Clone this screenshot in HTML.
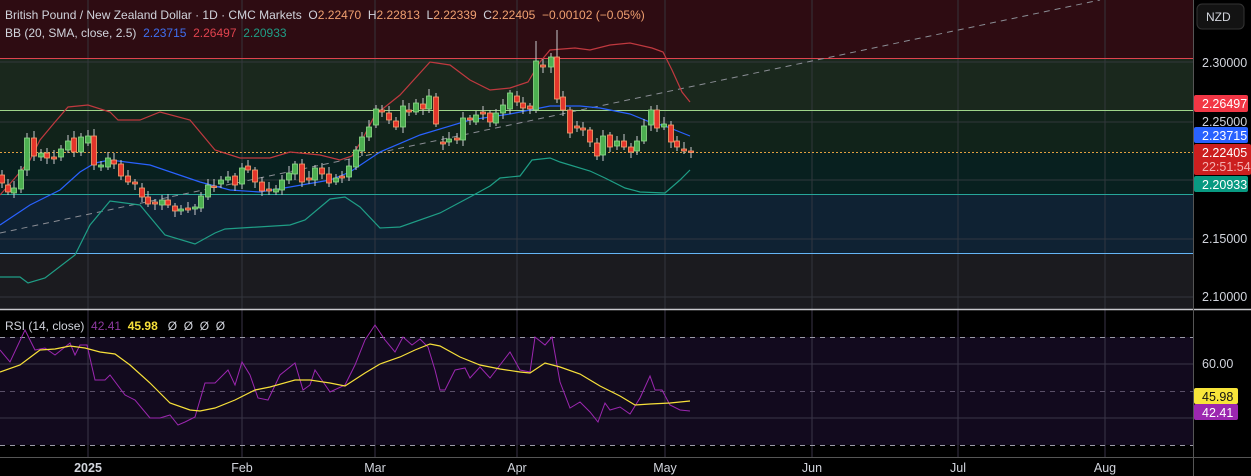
<!DOCTYPE html>
<html><head><meta charset="utf-8"><style>
html,body{margin:0;padding:0;background:#000;width:1251px;height:476px;overflow:hidden;font-family:"Liberation Sans",sans-serif}
svg text{font-family:"Liberation Sans",sans-serif}
</style></head><body>
<svg id="s" width="1251" height="476" xmlns="http://www.w3.org/2000/svg">
<rect x="0" y="0" width="1193" height="309" fill="#1b1b1f"/>
<rect x="0" y="0" width="1193" height="58" fill="#2e0c12"/>
<rect x="0" y="58" width="1193" height="52" fill="#1a281d"/>
<rect x="0" y="110" width="1193" height="42" fill="#11231a"/>
<rect x="0" y="152" width="1193" height="42" fill="#08201f"/>
<rect x="0" y="194" width="1193" height="59" fill="#0f2233"/>
<g stroke="#3a3d44" stroke-width="1" opacity="0.8">
<line x1="0" y1="62" x2="1193" y2="62"/><line x1="0" y1="122" x2="1193" y2="122"/><line x1="0" y1="180" x2="1193" y2="180"/><line x1="0" y1="239" x2="1193" y2="239"/><line x1="0" y1="297" x2="1193" y2="297"/>
<line x1="88" y1="0" x2="88" y2="457"/><line x1="242" y1="0" x2="242" y2="457"/><line x1="375" y1="0" x2="375" y2="457"/><line x1="517" y1="0" x2="517" y2="457"/><line x1="665" y1="0" x2="665" y2="457"/><line x1="812" y1="0" x2="812" y2="457"/><line x1="958" y1="0" x2="958" y2="457"/><line x1="1105" y1="0" x2="1105" y2="457"/>
</g>
<line x1="0" y1="58.5" x2="1193" y2="58.5" stroke="#e0434e"/>
<line x1="0" y1="110.5" x2="1193" y2="110.5" stroke="#9ed68a"/>
<line x1="0" y1="152.5" x2="1193" y2="152.5" stroke="#e0a040" stroke-dasharray="2,2"/>
<line x1="0" y1="194.5" x2="1193" y2="194.5" stroke="#26a69a"/>
<line x1="0" y1="253.5" x2="1193" y2="253.5" stroke="#64b5f6"/>
<line x1="0" y1="233" x2="1100" y2="0" stroke="#8a8d94" stroke-dasharray="6,5"/>
<g id="bb" fill="none" stroke-width="1.2"></g>
<g id="cd"></g>
<rect x="0" y="310" width="1193" height="147" fill="#000"/>
<rect x="0" y="337" width="1193" height="108" fill="#120a1e"/>
<g stroke="#3a3548"><line x1="0" y1="364" x2="1193" y2="364"/><line x1="0" y1="418" x2="1193" y2="418"/>
<line x1="88" y1="310" x2="88" y2="457"/><line x1="242" y1="310" x2="242" y2="457"/><line x1="375" y1="310" x2="375" y2="457"/><line x1="517" y1="310" x2="517" y2="457"/><line x1="665" y1="310" x2="665" y2="457"/><line x1="812" y1="310" x2="812" y2="457"/><line x1="958" y1="310" x2="958" y2="457"/><line x1="1105" y1="310" x2="1105" y2="457"/></g>
<g stroke="#9a9aa6" stroke-dasharray="5,5"><line x1="0" y1="337.5" x2="1193" y2="337.5"/><line x1="0" y1="391.5" x2="1193" y2="391.5" stroke="#5a5068"/><line x1="0" y1="445.5" x2="1193" y2="445.5"/></g>
<polyline id="rsi" fill="none" stroke="#9c27b0" stroke-width="1"/>
<polyline id="rsma" fill="none" stroke="#f7e03a" stroke-width="1.2"/>
<line x1="0" y1="309.5" x2="1251" y2="309.5" stroke="#c8c8cc" stroke-width="1.5"/>
<line x1="0" y1="457.5" x2="1251" y2="457.5" stroke="#555"/>
<line x1="1193.5" y1="0" x2="1193.5" y2="476" stroke="#555"/>
<text x="5" y="19" font-size="12" fill="#d1d4dc" xml:space="preserve" style="white-space:pre">British Pound / New Zealand Dollar · 1D · CMC Markets  O<tspan fill="#f0a070">2.22470</tspan>  H<tspan fill="#f0a070">2.22813</tspan>  L<tspan fill="#f0a070">2.22339</tspan>  C<tspan fill="#f0a070">2.22405  −0.00102 (−0.05%)</tspan></text>
<text x="5" y="37" font-size="12" fill="#d1d4dc" xml:space="preserve" style="white-space:pre">BB (20, SMA, close, 2.5)  <tspan fill="#3f6ff0">2.23715</tspan>  <tspan fill="#e0434e">2.26497</tspan>  <tspan fill="#1f9e86">2.20933</tspan></text>
<text x="5" y="330" font-size="12" fill="#d1d4dc" xml:space="preserve" style="white-space:pre">RSI (14, close)  <tspan fill="#8e3aa0">42.41</tspan>  <tspan fill="#f7e03a" font-weight="bold">45.98</tspan>   Ø  Ø  Ø  Ø</text>
<rect x="1197" y="4" width="47" height="25" rx="5" fill="#131313" stroke="#333"/>
<text x="1206" y="21" font-size="12" fill="#d1d4dc">NZD</text>
<g font-size="12.5" fill="#d1d4dc">
<text x="1202" y="67">2.30000</text><text x="1202" y="126">2.25000</text><text x="1202" y="243">2.15000</text><text x="1202" y="301">2.10000</text><text x="1202" y="368">60.00</text></g>
<rect x="1194" y="95" width="54" height="17" rx="2" fill="#f23645"/><text x="1202" y="108" font-size="12.5" fill="#fff">2.26497</text>
<rect x="1194" y="127" width="54" height="16" rx="2" fill="#2962ff"/><text x="1202" y="140" font-size="12.5" fill="#fff">2.23715</text>
<rect x="1194" y="144" width="57" height="31" rx="2" fill="#cc1f1f"/><text x="1202" y="157" font-size="12.5" fill="#fff">2.22405</text><text x="1202" y="171" font-size="12.5" fill="#f4b0b0">22:51:54</text>
<rect x="1194" y="176" width="54" height="16" rx="2" fill="#089981"/><text x="1202" y="189" font-size="12.5" fill="#fff">2.20933</text>
<rect x="1194" y="388" width="44" height="16" rx="2" fill="#f7e53a"/><text x="1202" y="401" font-size="12.5" fill="#111">45.98</text>
<rect x="1194" y="404" width="44" height="16" rx="2" fill="#9c27b0"/><text x="1202" y="417" font-size="12.5" fill="#fff">42.41</text>
<g font-size="12.5" fill="#d1d4dc" text-anchor="middle">
<text x="88" y="472" font-weight="bold">2025</text><text x="242" y="472">Feb</text><text x="375" y="472">Mar</text><text x="517" y="472">Apr</text><text x="665" y="472">May</text><text x="812" y="472">Jun</text><text x="958" y="472">Jul</text><text x="1105" y="472">Aug</text></g>
</svg>
<script>
var NS="http://www.w3.org/2000/svg";
function pl(pts,col,parent){var p=document.createElementNS(NS,"polyline");p.setAttribute("points",pts.map(function(a){return a.join(",")}).join(" "));p.setAttribute("stroke",col);p.setAttribute("fill","none");p.setAttribute("stroke-width","1.2");document.getElementById(parent).appendChild(p);}
pl([[0,195],[15,178],[30,160],[40,140],[55,122],[68,107],[88,105],[110,112],[118,120],[140,120],[160,112],[190,120],[215,150],[240,158],[270,158],[290,152],[320,155],[340,160],[352,156],[362,140],[375,115],[400,95],[430,62],[450,65],[470,80],[490,90],[510,88],[528,82],[540,62],[550,50],[575,48],[590,50],[610,45],[630,43],[652,48],[663,52],[672,70],[682,92],[690,102]],"#c0393f","bb");
pl([[0,225],[30,205],[60,190],[80,172],[95,163],[110,160],[150,165],[200,182],[230,190],[260,192],[290,187],[330,180],[350,172],[365,162],[380,152],[420,135],[470,120],[510,114],[550,106],[580,106],[600,108],[630,114],[650,122],[665,126],[690,136]],"#2962ff","bb");
pl([[0,277],[20,277],[28,283],[45,278],[75,255],[90,225],[110,201],[140,205],[165,235],[195,244],[215,233],[225,229],[290,225],[305,220],[330,199],[345,197],[360,207],[380,228],[400,227],[440,213],[470,197],[490,186],[500,178],[520,176],[532,160],[550,158],[560,162],[590,171],[605,178],[625,188],[640,192],[665,193],[680,180],[690,170]],"#1f9e86","bb");
var C=[[2,175,183],[8,185,192],[14,193,188],[21,189,170],[27,170,138],[34,138,156],[41,157,153],[47,153,158],[54,157,159],[61,157,149],[68,150,141],[74,138,152],[81,152,137],[88,143,136],[94,136,165],[101,167,165],[108,167,158],[114,160,164],[121,164,176],[128,176,182],[135,182,184],[142,188,197],[148,197,204],[155,202,204],[162,205,200],[168,200,205],[175,206,211],[181,211,209],[188,208,210],[195,209,207],[201,208,196],[208,197,185],[214,186,187],[221,184,180],[228,180,177],[235,176,185],[242,184,168],[248,166,170],[255,170,182],[262,182,191],[269,189,191],[276,192,189],[282,190,180],[289,180,173],[295,174,164],[302,164,182],[309,178,180],[315,180,168],[322,168,174],[329,174,183],[336,182,178],[342,176,178],[349,177,166],[356,167,150],[362,151,137],[369,137,127],[376,125,109],[382,110,112],[389,113,120],[396,121,127],[403,127,106],[409,110,112],[416,112,103],[423,104,109],[429,109,96],[436,97,124],[443,142,144],[449,142,139],[457,138,140],[463,140,118],[470,118,120],[476,122,115],[483,112,114],[490,113,122],[496,123,113],[503,113,105],[510,109,93],[517,96,102],[523,103,108],[530,106,109],[536,110,61],[543,65,67],[551,67,57],[557,57,99],[563,97,110],[570,110,133],[577,126,128],[583,128,130],[590,130,142],[597,143,156],[603,155,136],[610,135,147],[617,146,141],[624,141,147],[631,147,152],[637,151,141],[644,141,126],[651,125,110],[657,110,128],[664,127,124],[671,125,142],[677,141,147],[684,149,151],[691,151,152]];
var g=document.getElementById("cd"),h="";
C.forEach(function(c){var x=c[0],o=c[1],cl=c[2],up=cl<o,t=Math.min(o,cl),b=Math.max(o,cl);
var hi=t-3-(x%5),lo=b+3+(x%4);if(x==536)hi=41;if(x==557)hi=30;
var fill=up?"#4caf50":"#e5352b",st=up?"#8fdc8a":"#f7a36f";
h+='<line x1="'+x+'" y1="'+hi+'" x2="'+x+'" y2="'+lo+'" stroke="#c8c8cc" stroke-width="1"/>';
var hh=Math.max(b-t,1.5);
h+='<rect x="'+(x-2.5)+'" y="'+t+'" width="5" height="'+hh+'" fill="'+fill+'" stroke="'+st+'" stroke-width="0.8"/>';});
g.innerHTML=h;
function pts(a){return a.map(function(p){return p.join(",")}).join(" ");}
document.getElementById("rsi").setAttribute("points",pts([[0,350],[10,362],[25,330],[35,350],[45,348],[55,355],[70,343],[75,355],[80,345],[87,345],[95,380],[105,380],[110,375],[125,395],[135,400],[150,418],[160,418],[170,415],[178,425],[185,422],[195,417],[205,383],[215,383],[228,370],[235,385],[242,362],[250,375],[258,398],[268,400],[280,375],[295,363],[303,390],[310,385],[315,370],[330,392],[345,385],[355,365],[365,340],[375,325],[385,340],[395,352],[403,337],[412,345],[420,339],[428,347],[435,370],[440,390],[445,390],[455,370],[465,368],[470,378],[480,367],[490,378],[500,365],[510,352],[520,370],[530,372],[535,337],[545,345],[552,337],[560,382],[570,408],[580,402],[590,412],[598,422],[605,403],[610,410],[620,407],[630,414],[640,398],[650,376],[655,390],[662,390],[670,405],[680,410],[690,411]]));
document.getElementById("rsma").setAttribute("points",pts([[0,372],[20,365],[40,350],[55,349],[70,346],[85,348],[100,352],[115,354],[130,365],[150,383],[170,403],[190,410],[200,411],[215,408],[235,400],[255,390],[270,387],[295,380],[310,380],[330,383],[345,386],[365,373],[380,364],[400,357],[415,350],[430,344],[440,346],[460,357],[480,365],[500,369],[520,372],[530,373],[545,363],[560,367],[580,374],[600,386],[620,396],[635,405],[650,404],[670,403],[690,401]]));
</script>
</body></html>
